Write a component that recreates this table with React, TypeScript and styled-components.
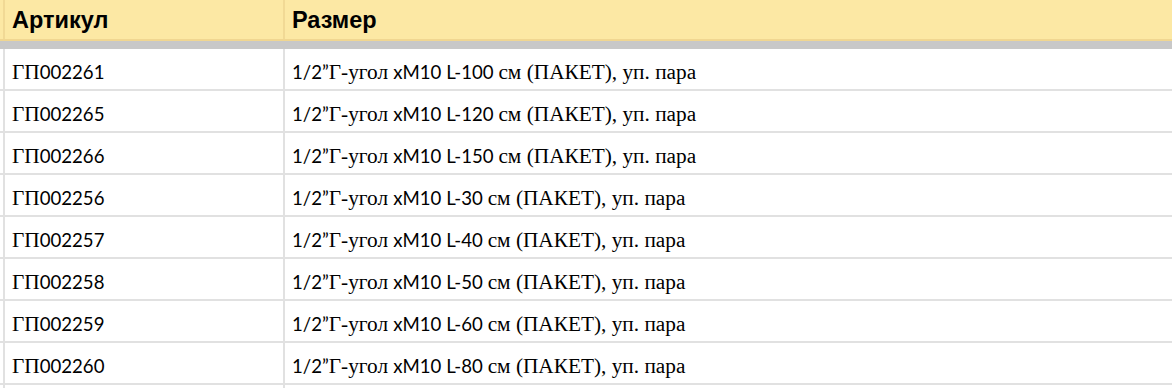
import React from "react";
import styled, { createGlobalStyle } from "styled-components";

const GlobalStyle = createGlobalStyle`
  html, body { margin: 0; padding: 0; background: #ffffff; overflow: hidden; }
  body { font-family: "Liberation Serif", "Times New Roman", serif; color: #000; }
`;

const Sheet = styled.div`
  width: 1172px;
  display: flex;
  flex-direction: column;
`;

const HeaderRow = styled.div`
  display: grid;
  grid-template-columns: 280px 1fr;
  height: 39px;
  padding-left: 3px;
  background: #fce8a4;
  border-bottom: 2px solid #f0d691;
`;

const HeaderCell = styled.div`
  display: flex;
  align-items: center;
  padding: 1px 0 0 7px;
  border-left: 2px solid #f1d995;
  font-family: "Liberation Sans", Arial, sans-serif;
  font-weight: 700;
  font-size: 23.5px;
  color: #000;
`;

const Band = styled.div`
  height: 8px;
  background: #c8c8c8;
`;

const BodyRow = styled.div`
  display: grid;
  grid-template-columns: 280px 1fr;
  height: 40px;
  padding-left: 3px;
  border-bottom: 2px solid #e1e1e1;
`;

const Cell = styled.div`
  display: flex;
  align-items: center;
  padding: 6px 0 0 7px;
  border-left: 2px solid #e1e1e1;
  white-space: pre;
`;

const Latin = styled.span`
  font-family: Lato, "Open Sans", sans-serif;
  font-size: 18.6px;
`;

const Cyr = styled.span`
  font-family: "Liberation Serif", "Times New Roman", serif;
  font-size: 21.3px;
`;

type Run = { cyr: boolean; text: string };

function splitRuns(text: string): Run[] {
  const chars = Array.from(text);
  const kinds: (boolean | null)[] = chars.map((c) =>
    /[\u0400-\u04FF]/.test(c) ? true : /[A-Za-z0-9]/.test(c) ? false : null
  );
  let prev: boolean | null = null;
  for (let i = 0; i < kinds.length; i++) {
    if (kinds[i] === null) {
      if (prev !== null) kinds[i] = prev;
    } else prev = kinds[i];
  }
  let next: boolean = false;
  for (let i = kinds.length - 1; i >= 0; i--) {
    if (kinds[i] === null) kinds[i] = next;
    else next = kinds[i] as boolean;
  }
  const runs: Run[] = [];
  chars.forEach((c, i) => {
    const k = kinds[i] as boolean;
    const last = runs[runs.length - 1];
    if (last && last.cyr === k) last.text += c;
    else runs.push({ cyr: k, text: c });
  });
  return runs;
}

const MixedText: React.FC<{ text: string }> = ({ text }) => (
  <>
    {splitRuns(text).map((r, i) =>
      r.cyr ? <Cyr key={i}>{r.text}</Cyr> : <Latin key={i}>{r.text}</Latin>
    )}
  </>
);

const rows: [string, number][] = [
  ["ГП002261", 100],
  ["ГП002265", 120],
  ["ГП002266", 150],
  ["ГП002256", 30],
  ["ГП002257", 40],
  ["ГП002258", 50],
  ["ГП002259", 60],
  ["ГП002260", 80],
];

export default function App() {
  return (
    <>
      <GlobalStyle />
      <Sheet>
        <HeaderRow>
          <HeaderCell>Артикул</HeaderCell>
          <HeaderCell>Размер</HeaderCell>
        </HeaderRow>
        <Band />
        {rows.map(([code, len]) => (
          <BodyRow key={code}>
            <Cell>
              <MixedText text={code} />
            </Cell>
            <Cell>
              <MixedText text={`1/2”Г-угол xM10 L-${len} см (ПАКЕТ), уп. пара`} />
            </Cell>
          </BodyRow>
        ))}
        <BodyRow>
          <Cell />
          <Cell />
        </BodyRow>
      </Sheet>
    </>
  );
}
